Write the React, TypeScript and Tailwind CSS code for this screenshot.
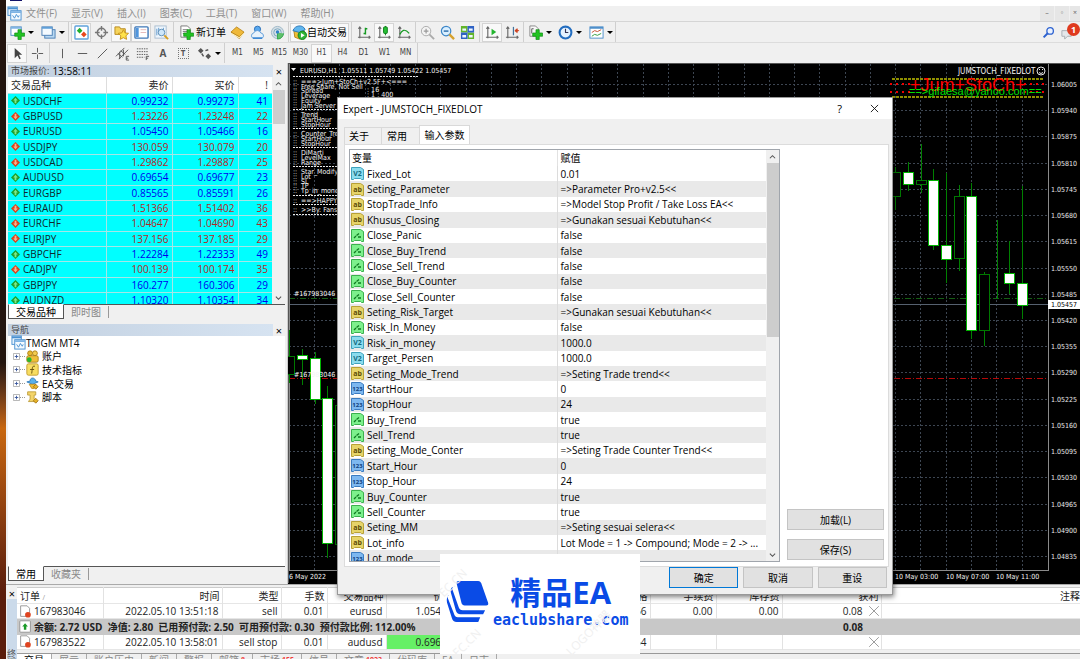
import type { ReactNode } from "react";

type Quote = [symbol: string, bid: string, ask: string, spread: number, up: boolean];
type ParamKind = "double" | "string" | "bool" | "int";

const QUOTES: Quote[] = [
  ["USDCHF", "0.99232", "0.99273", 41, true],
  ["GBPUSD", "1.23226", "1.23248", 22, false],
  ["EURUSD", "1.05450", "1.05466", 16, true],
  ["USDJPY", "130.059", "130.079", 20, false],
  ["USDCAD", "1.29862", "1.29887", 25, false],
  ["AUDUSD", "0.69654", "0.69677", 23, true],
  ["EURGBP", "0.85565", "0.85591", 26, true],
  ["EURAUD", "1.51366", "1.51402", 36, false],
  ["EURCHF", "1.04647", "1.04690", 43, false],
  ["EURJPY", "137.156", "137.185", 29, false],
  ["GBPCHF", "1.22284", "1.22333", 49, true],
  ["CADJPY", "100.139", "100.174", 35, false],
  ["GBPJPY", "160.277", "160.306", 29, true],
  ["AUDNZD", "1.10320", "1.10354", 34, true],
];

const PARAMS: [ParamKind, string, string][] = [
  ["double", "Fixed_Lot", "0.01"],
  ["string", "Seting_Parameter", "=>Parameter Pro+v2.5<<"],
  ["string", "StopTrade_Info", "=>Model Stop Profit / Take Loss EA<<"],
  ["string", "Khusus_Closing", "=>Gunakan sesuai Kebutuhan<<"],
  ["bool", "Close_Panic", "false"],
  ["bool", "Close_Buy_Trend", "false"],
  ["bool", "Close_Sell_Trend", "false"],
  ["bool", "Close_Buy_Counter", "false"],
  ["bool", "Close_Sell_Counter", "false"],
  ["string", "Seting_Risk_Target", "=>Gunakan sesuai Kebutuhan<<"],
  ["bool", "Risk_In_Money", "false"],
  ["double", "Risk_in_money", "1000.0"],
  ["double", "Target_Persen", "1000.0"],
  ["string", "Seting_Mode_Trend", "=>Seting Trade trend<<"],
  ["int", "StartHour", "0"],
  ["int", "StopHour", "24"],
  ["bool", "Buy_Trend", "true"],
  ["bool", "Sell_Trend", "true"],
  ["string", "Seting_Mode_Conter", "=>Seting Trade Counter Trend<<"],
  ["int", "Start_Hour", "0"],
  ["int", "Stop_Hour", "24"],
  ["bool", "Buy_Counter", "true"],
  ["bool", "Sell_Counter", "true"],
  ["string", "Seting_MM", "=>Seting sesuai selera<<"],
  ["string", "Lot_info", "Lot Mode = 1 -> Compound; Mode = 2 -> ..."],
  ["int", "Lot_mode", "1"],
];

const PRICES = [
  "1.06005", "1.05940", "1.05875", "1.05810", "1.05745", "1.05680", "1.05615",
  "1.05550", "1.05485", "1.05420", "1.05355", "1.05290", "1.05225", "1.05160",
  "1.05095", "1.05030", "1.04965", "1.04900", "1.04835",
];

// x, high, low, body top, body bottom, bearish
const CANDLES: [number, number, number, number, number, boolean][] = [
  [1, 267, 320, 293, 311, false],
  [14, 286, 322, 292, 296, true],
  [27, 289, 341, 295, 336, true],
  [39, 323, 495, 335, 480, true],
  [52, 330, 495, 342, 481, false],
  [607, 104, 147, 109, 133, false],
  [620, 99, 128, 109, 121, true],
  [633, 81, 130, 117, 121, false],
  [645, 106, 187, 117, 182, true],
  [658, 110, 220, 182, 196, true],
  [671, 122, 208, 133, 195, false],
  [683, 120, 276, 133, 267, true],
  [696, 209, 283, 211, 267, false],
  [709, 157, 236, 211, 211, false],
  [721, 178, 231, 210, 220, true],
  [734, 123, 256, 220, 242, true],
];

const COMMENTS = [
  "-", "===>Jum+StoCh+v2.5F+<===", "Free Share, Not Sell", "Spread", "Leverage", "Equity",
  "Jam Server", "-", "Trend", "StartHour", "StopHour", "-", "Counter_Trend", "StartHour",
  "StopHour", "-", "DiMarti", "LevelMax", "Range", "-", "Star_Modify", "Lot", "SL", "TP",
  "Tp_in_money", "-", "==>HAPPY", "-", ">>By: Fansdi", "-",
];

function Svg({ children, size = "size-[15px]" }: { children: ReactNode; size?: string }) {
  return (
    <svg viewBox="0 0 16 16" className={`${size} shrink-0`} fill="none" aria-hidden="true">
      {children}
    </svg>
  );
}

const Plus = ({ x = 5, y = 5 }: { x?: number; y?: number }) => (
  <path
    d={`M${x + 3.5} ${y}h3.500v3.500h3.500v3.500h-3.500v3.500h-3.500v-3.500h-3.500v-3.500h3.500z`}
    fill="#22c322"
    stroke="#0a8a12"
    strokeWidth=".7"
  />
);

const Axes = () => (
  <path d="M3 2v12M1 13h13M1.500 4L3 2l1.500 2M12.500 11.500L14 13l-1.500 1.500" stroke="#666" strokeWidth="1.200" />
);

const Windows = () => (
  <Svg>
    <rect x="1" y="1" width="10" height="9" fill="#e8f3fd" stroke="#4a90d0" />
    <path d="M1 2.500h10" stroke="#4a90d0" strokeWidth="2" />
    <rect x="4" y="5" width="11" height="10" fill="#f4faff" stroke="#4a90d0" />
    <path d="M4 6.500h11" stroke="#7fb4e4" strokeWidth="2" />
    <path d="M6 10l2 3 2-4 2 3 1-2" stroke="#4a90d0" />
  </Svg>
);

function Tool({ label, pressed, children }: { label: string; pressed?: boolean; children: ReactNode }) {
  return (
    <button
      type="button"
      aria-label={label}
      className={`flex h-[19px] w-5 shrink-0 items-center justify-center ${
        pressed ? "border border-[#d4d4d4] bg-[#f9f9f9]" : ""
      }`}
    >
      {children}
    </button>
  );
}

const Caret = () => (
  <span className="flex w-2 shrink-0 justify-center">
    <span className="border-x-[3px] border-t-[3px] border-x-transparent border-t-black" />
  </span>
);

const Sep = ({ wide }: { wide?: boolean }) => (
  <span className={`flex h-full shrink-0 justify-center ${wide ? "w-[5px]" : "w-[3px]"}`}>
    <span className="w-px bg-[#cfcfcf]" />
  </span>
);

function MenuBar() {
  const menus = ["文件(F)", "显示(V)", "插入(I)", "图表(C)", "工具(T)", "窗口(W)", "帮助(H)"];
  return (
    <nav className="flex h-4 shrink-0 items-center border-b border-[#d5d5d5] bg-[#f0f0f0] pl-px text-[10px] text-[#8f8f8f]">
      <Windows />
      <div className="ml-1 flex gap-[14px]">
        {menus.map((m) => (
          <button key={m} type="button">{m}</button>
        ))}
      </div>
      <div className="ml-auto flex h-full gap-px text-[7px] text-[#666]">
        <button type="button" aria-label="Minimize" className="w-[14px] bg-[#e6e6e6]">–</button>
        <button type="button" aria-label="Restore" className="w-[14px] bg-[#e6e6e6]">▫</button>
        <button type="button" aria-label="Close" className="w-[10px] bg-[#e6e6e6]">×</button>
      </div>
    </nav>
  );
}

function MainToolbar() {
  return (
    <div className="flex h-[21px] shrink-0 items-center border-b border-[#dcdcdc] bg-[#f0f0f0] pl-px text-[10px] text-black">
      <Tool label="New chart">
        <Svg>
          <rect x="1" y="2" width="11" height="9" fill="#fff" stroke="#4d8ac4" />
          <path d="M1 3h11" stroke="#7fb4e4" strokeWidth="2" />
          <Plus />
        </Svg>
      </Tool>
      <Caret />
      <span className="w-[3px]" />
      <Tool label="Profiles">
        <Svg>
          <rect x="4" y="5" width="11" height="9" fill="#b9d8f2" stroke="#4a7fb5" />
          <rect x="1" y="2" width="11" height="9" fill="#f4faff" stroke="#4a7fb5" />
          <path d="M1 3h11" stroke="#5f9fd8" strokeWidth="2" />
        </Svg>
      </Tool>
      <Caret />
      <Sep wide />
      <Tool label="Market watch" pressed>
        <Svg>
          <rect x="1" y="1" width="14" height="14" rx="1" fill="#fff" stroke="#5fa3dc" strokeWidth="1.500" />
          <path d="M6 3l3 3-3 3-3-3z" fill="#1fae2d" />
          <path d="M10.500 7l3 3-3 3-3-3z" fill="#e8471c" />
        </Svg>
      </Tool>
      <Tool label="Data window">
        <Svg>
          <circle cx="8" cy="8" r="4.500" stroke="#777" strokeWidth="1.500" />
          <path d="M8 1v5M8 10v5M1 8h5M10 8h5" stroke="#777" strokeWidth="1.500" />
        </Svg>
      </Tool>
      <Tool label="Navigator" pressed>
        <Svg>
          <path d="M1 2h5l1 2h5v6H1z" fill="#f6d45c" stroke="#b88a1d" />
          <path d="M10 5l1.700 3.400 3.800.5-2.800 2.600.7 3.800L10 13.500l-3.400 1.800.7-3.800-2.800-2.600 3.800-.5z" fill="#ffe24a" stroke="#c6921a" />
        </Svg>
      </Tool>
      <Tool label="Terminal" pressed>
        <Svg>
          <rect x="1" y="2" width="14" height="12" rx="1" fill="#fff" stroke="#3f78b8" strokeWidth="1.500" />
          <rect x="2" y="3" width="3" height="10" fill="#4f95dd" />
          <path d="M7 5h6M7 8h6" stroke="#e3b6b6" />
        </Svg>
      </Tool>
      <Tool label="Strategy tester">
        <Svg>
          <rect x="1" y="1" width="12" height="13" fill="#eef6fd" stroke="#a9bdd0" />
          <path d="M3 4v7M5 3v6M10 3v3" stroke="#5e97cc" />
          <circle cx="8" cy="8" r="3.500" fill="#cfe8fb" stroke="#5d8db5" />
          <path d="M11 11l4 4" stroke="#d9a022" strokeWidth="2" />
        </Svg>
      </Tool>
      <Sep wide />
      <button type="button" className="mr-px flex h-full items-center whitespace-nowrap">
        <span className="flex w-5 justify-center">
          <Svg>
            <path d="M2 1h7l3 3v9H2z" fill="#fff" stroke="#777" />
            <path d="M4 5h5M4 7h5M4 9h3" stroke="#777" />
            <Plus />
          </Svg>
        </span>
        新订单
      </button>
      <Tool label="MetaEditor">
        <Svg>
          <path d="M1 8l6-6 8 6-5 7z" fill="#a8720f" />
          <path d="M1.500 9l8.500 4.500 4.500-5" stroke="#fff0b8" strokeWidth="1.500" />
          <path d="M1 7.500L7 2l8 5.500-5 5z" fill="#efb93a" stroke="#b07c15" strokeWidth=".7" />
        </Svg>
      </Tool>
      <Tool label="Community">
        <Svg>
          <circle cx="8" cy="4.500" r="3.300" fill="#57a7ee" stroke="#2a6fb8" />
          <path d="M3 14a3 3 0 0 1 1-5.500 4 4 0 0 1 7.500 0A3 3 0 0 1 13 14z" fill="#e8f2fb" stroke="#5b9ad8" />
          <path d="M3 14h10" stroke="#2f7fd0" strokeWidth="1.500" />
        </Svg>
      </Tool>
      <Tool label="Signals">
        <Svg>
          <circle cx="8" cy="8" r="6.500" fill="#d5dfe6" stroke="#9db8c6" />
          <circle cx="8" cy="8" r="4" stroke="#7aa8c0" />
          <path d="M8 8v7c4 0 6-3 6.500-6" fill="#5fc06c" stroke="#32a84b" />
          <circle cx="8" cy="7.500" r="1.800" fill="#2f80c8" />
        </Svg>
      </Tool>
      <Sep />
      <button
        type="button"
        className="flex h-[19px] w-[59px] shrink-0 items-center whitespace-nowrap border border-[#d4d4d4] bg-[#f9f9f9] pl-px"
      >
        <Svg>
          <path d="M2 6h11v7l-5 2-5-2z" fill="#f1bf36" stroke="#b78717" />
          <path d="M1 6c2-6 11-7 13-1l-6 3z" fill="#60b6ee" stroke="#2b78b8" />
          <circle cx="11" cy="11" r="4.500" fill="#2fb336" stroke="#15801d" />
          <path d="M9.500 8.500l4 2.500-4 2.500z" fill="#fff" />
        </Svg>
        自动交易
      </button>
      <Sep wide />
      <Tool label="Bar chart">
        <Svg><Axes /><path d="M9 3v7M7 9h2M9 4h2" stroke="#159a22" strokeWidth="1.500" /></Svg>
      </Tool>
      <Tool label="Candlesticks" pressed>
        <Svg><Axes /><path d="M9 1v10" stroke="#0b7a16" /><rect x="7" y="2" width="4" height="7" rx="1" fill="#27c135" stroke="#0b7a16" /></Svg>
      </Tool>
      <Tool label="Line chart">
        <Svg><Axes /><path d="M3 10c2-4 5-7 10-1" stroke="#159a22" strokeWidth="1.300" /></Svg>
      </Tool>
      <Sep />
      <Tool label="Zoom in">
        <Svg>
          <circle cx="6.500" cy="6.500" r="5" fill="#f3f3f3" stroke="#aaa" />
          <path d="M4 6.500h5M6.500 4v5" stroke="#999" strokeWidth="1.300" />
          <path d="M10 10l5 5" stroke="#aaa" strokeWidth="2" />
        </Svg>
      </Tool>
      <Tool label="Zoom out">
        <Svg>
          <circle cx="6.500" cy="6.500" r="5" fill="#d9efff" stroke="#3c86c8" strokeWidth="1.300" />
          <path d="M4 6.500h5" stroke="#2769a8" strokeWidth="1.500" />
          <path d="M10 10l5 5" stroke="#d6a12d" strokeWidth="2.500" />
        </Svg>
      </Tool>
      <Tool label="Tile windows">
        <Svg>
          <path d="M1 1h7v7H1zM8 8h7v7H8z" fill="#62b52a" />
          <path d="M8 1h7v7H8zM1 8h7v7H1z" fill="#2f62c4" />
          <path d="M2.500 5h4M9.500 5h4M2.500 12h4M9.500 12h4" stroke="#eef6ff" strokeWidth="2.500" />
        </Svg>
      </Tool>
      <Sep wide />
      <Tool label="Auto scroll" pressed>
        <Svg><Axes /><path d="M7 4l5 3.500L7 11z" fill="#23b52f" /></Svg>
      </Tool>
      <Tool label="Chart shift">
        <Svg><Axes /><path d="M9 2v9" stroke="#44739c" strokeWidth="1.300" /><path d="M15 6h-4M13 4l-2.500 2L13 8z" stroke="#cc3e1d" fill="#cc3e1d" /></Svg>
      </Tool>
      <Sep />
      <Tool label="Indicators">
        <Svg>
          <path d="M2 1h6l3 3v8H2z" fill="#f7f7f7" stroke="#888" />
          <path d="M4 9V4h2" stroke="#555" />
          <Plus />
        </Svg>
      </Tool>
      <Caret />
      <span className="w-[2px]" />
      <Tool label="Periods">
        <Svg>
          <circle cx="8" cy="8" r="6.300" fill="#e4f2ff" stroke="#246ec0" strokeWidth="2.200" />
          <path d="M8 4v4h3" stroke="#335" strokeWidth="1.200" />
        </Svg>
      </Tool>
      <Caret />
      <span className="w-[3px]" />
      <Tool label="Templates">
        <Svg>
          <rect x="1" y="2" width="14" height="12" fill="#fff" stroke="#4e8fca" />
          <path d="M1 3h14" stroke="#4e8fca" strokeWidth="2" />
          <path d="M3 8l3-2 3 1 4-2" stroke="#c24a2a" />
          <path d="M3 12l3-2 3 1 4-2" stroke="#2d9b3a" />
        </Svg>
      </Tool>
      <Caret />
      <Sep />
      <span className="ml-auto flex items-center gap-[5px]">
        <button type="button" aria-label="Search">
          <Svg size="size-[13px]">
            <circle cx="10" cy="6" r="4" fill="#eaf2ff" stroke="#2d62d0" strokeWidth="1.600" />
            <path d="M7 9l-5 5" stroke="#2d62d0" strokeWidth="2.500" />
          </Svg>
        </button>
        <button type="button" aria-label="Notifications" className="relative flex h-5 w-5 items-center">
          <Svg>
            <path d="M2 6h10v6H8l-3 3v-3H2z" fill="#e4e7ea" stroke="#a8adb2" />
          </Svg>
          <span className="absolute right-0 top-px flex size-[13px] items-center justify-center rounded-full bg-[#df3a1e] text-[9px] font-bold text-white">
            1
          </span>
        </button>
      </span>
    </div>
  );
}

function DrawToolbar() {
  const grey = "#555";
  return (
    <div className="flex h-5 shrink-0 items-center bg-[#f0f0f0] pl-px">
      <Tool label="Cursor" pressed>
        <Svg><path d="M5 2v11l3-3 2 4 1.500-.7-2-4H13z" fill="#444" /></Svg>
      </Tool>
      <Tool label="Crosshair">
        <Svg><path d="M8 2v5M8 9v5M2 8h5M9 8h5" stroke={grey} /></Svg>
      </Tool>
      <Sep wide />
      <Tool label="Vertical line"><Svg><path d="M8 3v10" stroke={grey} /></Svg></Tool>
      <Tool label="Horizontal line"><Svg><path d="M3 8h10" stroke={grey} /></Svg></Tool>
      <Tool label="Trendline"><Svg><path d="M3 13L13 3" stroke={grey} /></Svg></Tool>
      <Tool label="Equidistant channel">
        <Svg><path d="M1 11L10 2M4 14L14 4M3 8l5 4M6 5l5 4M5 14V6M9 11V4" stroke={grey} /><path d="M15 11h-3v4h3M12 13h2" stroke={grey} /></Svg>
      </Tool>
      <Tool label="Fibonacci">
        <Svg><path d="M2 3h12M2 6h12M2 9h12M2 12h8" stroke={grey} strokeDasharray="1.500 1" /><path d="M15 11h-3v4M12 13h2" stroke={grey} /></Svg>
      </Tool>
      <span className="w-px" />
      <Tool label="Text"><span className="text-[10px] font-bold text-[#555]">A</span></Tool>
      <Tool label="Text label">
        <span className="flex size-[11px] items-center justify-center border border-dotted border-[#777] text-[8px] font-bold text-[#555]">T</span>
      </Tool>
      <span className="w-px" />
      <Tool label="Arrows">
        <Svg><path d="M4 2l3 3-3 3-3-3zM12 8l3 3-3 3-3-3z" fill={grey} /><path d="M5 8l2 3M9 5l3-1" stroke={grey} strokeWidth="1.500" /></Svg>
      </Tool>
      <Caret />
      <Sep wide />
      <div className="flex h-full items-center font-['DejaVu_Sans_Condensed',sans-serif] text-[8px] text-[#444]">
        {["M1", "M5", "M15", "M30", "H1", "H4", "D1", "W1", "MN"].map((tf) => (
          <button
            key={tf}
            type="button"
            className={`h-[19px] w-[21px] ${tf === "H1" ? "border border-[#d4d4d4] bg-[#f9f9f9]" : ""}`}
          >
            {tf}
          </button>
        ))}
      </div>
      <Sep />
    </div>
  );
}

function PanelTitle({ children }: { children: ReactNode }) {
  return (
    <div className="flex h-3 shrink-0 items-center bg-[#f0f0f0] text-[9px] text-[#444]">
      <h2 className="flex h-full flex-1 items-center bg-gradient-to-r from-[#c2d0e0] to-[#d6e3f1] pl-[3px]">
        {children}
      </h2>
      <button type="button" aria-label="Close" className="w-3 text-[11px] leading-none text-black">×</button>
    </div>
  );
}

function PanelTabs({ tabs }: { tabs: [string, string] }) {
  return (
    <div className="flex h-4 shrink-0 items-start border-t border-[#555] bg-[#f0f0f0] text-[10px]">
      <button type="button" className="-mt-px h-[15px] border border-[#555] border-t-white bg-white px-[7px] leading-none text-black">
        {tabs[0]}
      </button>
      <button type="button" className="mt-px h-3 border-r border-[#999] px-[7px] leading-none text-[#888]">
        {tabs[1]}
      </button>
    </div>
  );
}

function MarketWatch() {
  return (
    <section className="flex flex-col">
      <PanelTitle>
        市场报价: <span className="ml-[3px] text-[10px] text-black">13:58:11</span>
      </PanelTitle>
      <div className="flex h-[227px] overflow-hidden bg-white">
        <div className="flex-1 overflow-hidden">
          <table className="h-[231px] w-full table-fixed border-collapse text-[10px] leading-none">
            <colgroup>
              <col />
              <col className="w-[66px]" />
              <col className="w-[66px]" />
              <col className="w-[34px]" />
            </colgroup>
            <thead>
              <tr className="h-4 text-[#222]">
                <th className="border-r border-[#ddd] p-0 pl-[3px] text-left font-normal">交易品种</th>
                <th className="border-r border-[#ddd] p-0 pr-[3px] text-right font-normal">卖价</th>
                <th className="border-r border-[#ddd] p-0 pr-[3px] text-right font-normal">买价</th>
                <th className="p-0 pr-1 text-right font-normal">!</th>
              </tr>
            </thead>
            <tbody className="bg-[#00ffff]">
              {QUOTES.map(([symbol, bid, ask, spread, up]) => (
                <tr key={symbol} className={`h-[15px] border-t border-[#a5e6e6] ${up ? "text-[#0000ee]" : "text-[#b82424]"}`}>
                  <td className="border-r border-[#a5e6e6] p-0 pl-[3px] text-[#10282c]">
                    <span className="flex items-center gap-[3px]">
                      <svg viewBox="0 0 10 10" className="size-[9px]" aria-hidden="true">
                        <path d="M5 0l5 5-5 5-5-5z" fill={up ? "#1d9f2c" : "#d8401c"} />
                        <path d={up ? "M5 2l2.500 3H6v3H4V5H2.500z" : "M5 8l2.500-3H6V2H4v3H2.500z"} fill={up ? "#7fe889" : "#ffb08a"} />
                      </svg>
                      {symbol}
                    </span>
                  </td>
                  <td className="border-r border-[#a5e6e6] p-0 pr-[3px] text-right">{bid}</td>
                  <td className="border-r border-[#a5e6e6] p-0 pr-[3px] text-right">{ask}</td>
                  <td className="p-0 pr-1 text-right">{spread}</td>
                </tr>
              ))}
            </tbody>
          </table>
        </div>
        <ScrollBar thumb="h-[34px]" />
      </div>
      <PanelTabs tabs={["交易品种", "即时图"]} />
    </section>
  );
}

function ScrollBar({ thumb }: { thumb: string }) {
  return (
    <div className="flex w-[13px] shrink-0 flex-col items-center bg-[#f0f0f0] py-[2px]">
      <svg viewBox="0 0 8 8" className="my-px size-[7px]" fill="none"><path d="M1 6l3-3 3 3" stroke="#555" strokeWidth="1.200" /></svg>
      <div className={`mt-[2px] w-[12px] bg-[#cdcdcd] ${thumb}`} />
      <svg viewBox="0 0 8 8" className="mb-px mt-auto size-[7px]" fill="none"><path d="M1 3l3 3 3-3" stroke="#555" strokeWidth="1.200" /></svg>
    </div>
  );
}

const NAV: [string, ReactNode][] = [
  ["账户", <><circle cx="5" cy="4" r="3" fill="#e8b830" stroke="#a87a10" /><circle cx="11" cy="4" r="3" fill="#f2cc52" stroke="#a87a10" /><rect x="1" y="7" width="14" height="8" rx="2" fill="#eebf3a" stroke="#a87a10" /><circle cx="4" cy="12" r="3" fill="#29b52f" /></>],
  ["技术指标", <><rect x="1" y="1" width="14" height="14" rx="2" fill="#f7dd62" stroke="#bd9422" /><path d="M11 4c-4-1-3 3-4 9M5 8h5" stroke="#6b5410" strokeWidth="1.200" /></>],
  ["EA交易", <><path d="M1 6l4-1c0-5 6-5 7 0l3 1-7 3z" fill="#5ab0ea" stroke="#2b78b8" /><path d="M4 9h8l-2 5H7z" fill="#f1bf36" stroke="#b78717" /><path d="M12 9l3 3-3 3-3-3z" fill="#e5b228" stroke="#9c6d10" /></>],
  ["脚本", <><path d="M2 1h10v4h-2v5l2 3H3l2-3V5H2z" fill="#f3d469" stroke="#b99831" /><path d="M12 9l3 3-3 3-3-3z" fill="#e5b228" stroke="#9c6d10" /></>],
];

function Navigator() {
  return (
    <section className="mt-1 flex flex-1 flex-col overflow-hidden">
      <PanelTitle>导航</PanelTitle>
      <div className="flex-1 bg-white">
        <ul className="grid h-[68px] grid-rows-5 pl-[3px] text-[10px] leading-none text-black">
          <li className="flex items-center">
            <Windows />
            TMGM MT4
          </li>
          {NAV.map(([label, icon]) => (
            <li key={label} className="flex items-center pl-[2px]">
              <svg viewBox="0 0 8 8" className="size-[7px]" fill="none" aria-hidden="true">
                <path d="M.5.5h7v7h-7z" stroke="#aaa" />
                <path d="M2 4h4M4 2v4" stroke="#36549c" />
              </svg>
              <span className="w-[5px] border-t border-dotted border-[#999]" />
              <span className="ml-px mr-[3px]"><Svg size="size-[13px]">{icon}</Svg></span>
              {label}
            </li>
          ))}
        </ul>
      </div>
      <PanelTabs tabs={["常用", "收藏夹"]} />
    </section>
  );
}

function Chart() {
  return (
    <section className="flex-1 overflow-hidden bg-black font-['DejaVu_Sans_Condensed',sans-serif] text-[7px] text-[#e8e8e8]">
      <svg className="block h-full w-full" fill="none" aria-label="EURUSD H1">
        <path d="M0 .5H792M.5 0V520" stroke="#555" />
        {PRICES.map((p, i) => (
          <g key={p}>
            <path d={`M1 ${Math.round(21 + i * 26.22)}.5H760`} stroke="#3d4652" strokeDasharray="2 2" />
            <text x="763" y={Math.round(24 + i * 26.22)} fill="#e8e8e8">{p}</text>
          </g>
        ))}
        {Array.from({ length: 29 }, (_, i) => (
          <path key={i} d={`M${Math.round(26 + i * 25.27)}.5 1V508`} stroke="#3d4652" strokeDasharray="2 2" />
        ))}
        <path d="M1 235.500H760" stroke="#155d15" strokeDasharray="6 2 1 2" />
        <path d="M1 241.500H760" stroke="#56616f" />
        <path d="M1 315.500H760" stroke="#b40808" strokeDasharray="6 2 1 2" />
        <path d="M1.500 1V508M1 507.500H760M760.500 1V508" stroke="#8a8a8a" />
        {CANDLES.map(([x, high, low, top, bottom, bear]) => (
          <g key={x} stroke={bear ? "#00b400" : "#007800"}>
            <path d={`M${x}.5 ${high}V${low}`} stroke="#008000" />
            <rect x={x - 4.5} y={top + 0.5} width="10" height={bottom - top} fill={bear ? "#fff" : "#000"} />
          </g>
        ))}
        <g fill="#f4f4f4">
          <path d="M3 5h5l-2.500 3z" />
          <text x="12" y="10" xmlSpace="preserve">EURUSD,H1  1.05511 1.05749 1.05422 1.05457</text>
          {COMMENTS.map((line, i) => {
            const y = Math.round(15 + i * 4.75);
            return line === "-" ? (
              <path key={i} d={`M5 ${y - 2}.5H${i === 0 ? 130 : 60}`} stroke="#e8e8e8" strokeDasharray="2 1" />
            ) : (
              <text key={i} y={y + 1}>
                <tspan x="5">::</tspan>
                <tspan x="13">{line}</tspan>
              </text>
            );
          })}
          <text x="79" y="29">: 16</text>
          <text x="79" y="34">: 1 : 400</text>
          <text x="6" y="233">#167983046</text>
          <text x="6" y="314">#167983046</text>
          <text x="1" y="516">6 May 2022</text>
          <text x="607" y="516">10 May 03:00</text>
          <text x="658" y="516">10 May 07:00</text>
          <text x="708" y="516">10 May 11:00</text>
          <text x="670" y="11" className="text-[8px]">JUMSTOCH_FIXEDLOT</text>
        </g>
        <g stroke="#e8e8e8">
          <circle cx="753" cy="8" r="4" />
          <path d="M751 9.500q2 2 4 0M751 6.500h1M754 6.500h1" />
        </g>
        <path d="M604 16H756M604 34H756" stroke="#8f8f00" strokeWidth="2" strokeDasharray="3 1" />
        <path d="M602 21h20M602 29h20M736 21h20M736 29h20" stroke="#f00000" strokeWidth="2" strokeDasharray="2 4" />
        <text x="622" y="28" fill="#ff0000" className="font-['Liberation_Sans',sans-serif] text-[18px]">+Jum+StoCh+</text>
        <text x="621" y="32" fill="#00e000" className="font-['Liberation_Sans',sans-serif] text-[11px]">==&gt;gifaesa@yahoo.com==</text>
        <rect x="760" y="237" width="40" height="9" fill="#fff" />
        <text x="763" y="244" fill="#000">1.05457</text>
      </svg>
    </section>
  );
}

const Doc = () => (
  <Svg size="size-[13px]">
    <path d="M2 1h8l3 3v10H2z" fill="#fff" stroke="#888" />
    <circle cx="11" cy="12" r="3.500" fill="#df4420" />
  </Svg>
);

type Order = { id: string; time: string; type: string; symbol: string; price: string; now: string; fee: string; profit: string };

function OrderRow({ order, pending }: { order: Order; pending?: boolean }) {
  const cell = "border-r border-[#e2e2e2] p-0 pr-[3px]";
  return (
    <tr className="h-[15px] border-b border-[#e6e6e6]">
      <td className={`${cell} text-left`}>
        <span className="flex items-center gap-[2px] pl-[2px]"><Doc />{order.id}</span>
      </td>
      <td className={cell}>{order.time}</td>
      <td className={cell}>{order.type}</td>
      <td className={cell}>0.01</td>
      <td className={cell}>{order.symbol}</td>
      <td className={`${cell} ${pending ? "bg-[#66f066]" : ""}`}>{order.price}</td>
      <td className={cell} />
      <td className={cell}>{order.now}</td>
      <td className={cell}>{order.fee}</td>
      <td className={cell}>{order.fee}</td>
      <td className="border-r border-[#e2e2e2] p-0 pr-px">
        <span className="flex items-center justify-end gap-[5px]">
          {order.profit}
          <button type="button" aria-label="Close order">
            <svg viewBox="0 0 10 10" className="size-3" fill="none"><path d="M1 1l8 8M9 1L1 9" stroke="#999" strokeWidth=".8" /></svg>
          </button>
        </span>
      </td>
      <td />
    </tr>
  );
}

function Terminal() {
  const heads = ["时间", "类型", "手数", "交易品种", "价格", "止损", "价格", "手续费", "库存费", "获利", "注释"];
  const tabs: [string, string?][] = [
    ["交易"], ["展示"], ["账户历史"], ["新闻"], ["警报"], ["邮箱", "8"], ["市场", "155"], ["信号"], ["文章", "1023"], ["代码库"], ["EA"], ["日志"],
  ];
  return (
    <section className="flex h-[75px] shrink-0 overflow-hidden border-t border-[#aaa] bg-[#f0f0f0] pt-[2px]">
      <div className="flex w-[11px] shrink-0 flex-col items-center pl-px">
        <button type="button" aria-label="Close" className="h-3 text-[11px] leading-none">×</button>
        <div className="flex w-[10px] flex-1 items-end bg-[#cbdaea] text-[9px] leading-none text-[#555]">
          <span className="-mb-[8px] [writing-mode:vertical-rl]">终端</span>
        </div>
      </div>
      <div className="min-w-0 flex-1">
        <table className="w-full table-fixed border-collapse border-t border-[#ccc] bg-white text-right text-[10px] leading-none text-[#222]">
          <colgroup>
            <col className="w-[86px]" />
            <col className="w-[119px]" />
            <col className="w-[59px]" />
            <col className="w-[46px]" />
            <col className="w-[59px]" />
            <col className="w-[70px]" />
            <col className="w-[130px]" />
            <col className="w-[64px]" />
            <col className="w-[66px]" />
            <col className="w-[66px]" />
            <col className="w-[99px]" />
            <col />
          </colgroup>
          <thead>
            <tr className="h-4 border-b border-[#e6e6e6]">
              <th className="border-r border-[#e2e2e2] p-0 pl-[3px] text-left font-normal">
                订单 <span className="text-[7px] text-[#999]">∕</span>
              </th>
              {heads.map((h, i) => (
                <th key={i} className="whitespace-nowrap border-r border-[#e2e2e2] p-0 pr-[2px] font-normal last:border-0 last:pr-0">{h}</th>
              ))}
            </tr>
          </thead>
          <tbody>
            <OrderRow
              order={{ id: "167983046", time: "2022.05.10 13:51:18", type: "sell", symbol: "eurusd", price: "1.05474", now: "1.05466", fee: "0.00", profit: "0.08" }}
            />
            <tr className="h-4 bg-[#c8c8c8] font-bold">
              <td colSpan={10} className="p-0 text-left">
                <span className="flex items-center gap-[2px] whitespace-pre pl-[2px]">
                  <Svg size="size-[13px]">
                    <rect x="1" y="1" width="13" height="14" rx="1" fill="#fff" stroke="#888" />
                    <path d="M7.500 4l3.500 4H9v4H6V8H4z" fill="#1b9a28" />
                  </Svg>
                  {"余额: 2.72 USD  净值: 2.80  已用预付款: 2.50  可用预付款: 0.30  预付款比例: 112.00%"}
                </span>
              </td>
              <td className="p-0 pr-[18px]">0.08</td>
              <td />
            </tr>
            <OrderRow
              pending
              order={{ id: "167983522", time: "2022.05.10 13:58:01", type: "sell stop", symbol: "audusd", price: "0.69612", now: "0.69654", fee: "", profit: "" }}
            />
          </tbody>
        </table>
        <div className="mt-[3px] flex items-start border-t border-[#999] text-[10px] leading-none text-[#888]">
          {tabs.map(([label, badge], i) => (
            <button
              key={label}
              type="button"
              className={`flex h-4 shrink-0 items-start gap-[2px] whitespace-nowrap border-r border-[#aaa] px-[7px] pt-px leading-none ${i === 0 ? "bg-white text-black" : ""}`}
            >
              {label}
              {badge && <span className="pt-px text-[7px] font-bold leading-none text-[#f04040]">{badge}</span>}
            </button>
          ))}
        </div>
      </div>
    </section>
  );
}

const KIND: Record<ParamKind, { fill: string; edge: string; ink: string; glyph: string }> = {
  double: { fill: "#8bdcee", edge: "#3fa3bd", ink: "#156b80", glyph: "V2" },
  string: { fill: "#e6d469", edge: "#b8a136", ink: "#5c4c08", glyph: "ab" },
  bool: { fill: "#7df08c", edge: "#3bb04d", ink: "#0e7a20", glyph: "" },
  int: { fill: "#7db8f0", edge: "#3b7cc0", ink: "#123f7c", glyph: "123" },
};

function KindIcon({ kind }: { kind: ParamKind }) {
  const k = KIND[kind];
  return (
    <svg viewBox="0 0 13 13" className="size-[13px] shrink-0" fill="none" aria-hidden="true">
      <path d="M.5.5h9l3 2v10h-2l-1-1h-6l-1 1h-2z" fill={k.fill} stroke={k.edge} />
      {kind === "bool" ? (
        <path d="M3 9l2-2M5.500 6.500L8 4.500M7 8h3" stroke={k.ink} strokeWidth="1.300" />
      ) : (
        <text x="6.500" y="9" textAnchor="middle" fill={k.ink} className={`font-bold ${kind === "int" ? "text-[6px]" : "text-[7px]"}`}>
          {k.glyph}
        </text>
      )}
    </svg>
  );
}

function DialogButton({ children, primary }: { children: ReactNode; primary?: boolean }) {
  return (
    <button
      type="button"
      className={`h-[21px] border bg-[#e1e1e1] text-[10px] leading-none text-black ${
        primary ? "border-[#0078d7]" : "border-[#c4c4c4]"
      }`}
    >
      {children}
    </button>
  );
}

function ExpertDialog() {
  return (
    <div
      role="dialog"
      aria-labelledby="expert-title"
      className="absolute left-[337px] top-[97px] w-[556px] border border-[#999] bg-[#f0f0f0] text-[10px] leading-none text-black shadow-[1px_2px_5px_rgba(0,0,0,0.5)]"
    >
      <header className="flex h-[21px] items-center bg-white pl-[5px] pr-[13px]">
        <h1 id="expert-title" className="flex-1">Expert - JUMSTOCH_FIXEDLOT</h1>
        <button type="button" className="mr-[28px] text-[11px]">?</button>
        <button type="button" aria-label="Close">
          <svg viewBox="0 0 10 10" className="size-[9px]" fill="none"><path d="M1 1l8 8M9 1L1 9" stroke="#111" /></svg>
        </button>
      </header>
      <div role="tablist" className="ml-[6px] mt-[6px] flex items-end">
        <button type="button" role="tab" className="h-[17px] w-[38px] border border-b-0 border-[#d9d9d9] pl-1 text-left">关于</button>
        <button type="button" role="tab" className="h-[17px] w-[37px] border border-x-0 border-b-0 border-[#d9d9d9] pl-[5px] text-left">常用</button>
        <button type="button" role="tab" aria-selected="true" className="h-[19px] w-[51px] border border-b-0 border-[#d9d9d9] bg-white">输入参数</button>
      </div>
      <div className="ml-[6px] mr-[3px] flex gap-[7px] border border-[#dcdcdc] bg-white p-1">
        <div className="flex h-[413px] min-w-0 flex-1 overflow-hidden border border-[#a0a5ac]">
          <div className="flex-1 overflow-hidden">
            <table className="h-[416px] w-full table-fixed border-collapse">
              <colgroup>
                <col className="w-[207px]" />
                <col />
              </colgroup>
              <thead>
                <tr className="h-4">
                  <th className="border-r border-[#e2e2e2] p-0 pl-[2px] text-left font-normal">变量</th>
                  <th className="p-0 pl-[3px] text-left font-normal">赋值</th>
                </tr>
              </thead>
              <tbody>
                {PARAMS.map(([kind, name, value]) => (
                  <tr key={name} className="h-[15px] even:bg-[#e9e9e9]">
                    <td className="border-r border-[#dcdcdc] p-0 pl-px">
                      <span className="flex items-center gap-[3px]">
                        <KindIcon kind={kind} />
                        {name}
                      </span>
                    </td>
                    <td className="truncate p-0 pl-[3px]">{value}</td>
                  </tr>
                ))}
              </tbody>
            </table>
          </div>
          <ScrollBar thumb="h-[174px]" />
        </div>
        <div className="flex w-[97px] flex-col justify-end gap-[9px] pb-[2px]">
          <DialogButton>加载(L)</DialogButton>
          <DialogButton>保存(S)</DialogButton>
        </div>
      </div>
      <footer className="ml-auto grid w-[223px] grid-cols-3 gap-[5px] pb-[6px] pr-[5px]">
        <DialogButton primary>确定</DialogButton>
        <DialogButton>取消</DialogButton>
        <DialogButton>重设</DialogButton>
      </footer>
    </div>
  );
}

function Watermark() {
  return (
    <div className="absolute left-[440px] top-[554px] flex h-[100px] w-[200px] items-center overflow-hidden bg-white pb-[5px] pl-[6px] text-[#0a4be6]">
      <span className="absolute -left-1 top-5 -rotate-45 text-[12px] text-[#f0f0f0]">EC.CN</span>
      <span className="absolute left-[120px] top-[70px] -rotate-45 text-[12px] text-[#f0f0f0]">LOGO神器</span>
      <span className="absolute left-[10px] top-[80px] -rotate-45 text-[12px] text-[#f0f0f0]">EC.CN</span>
      <svg viewBox="0 0 44 44" className="size-[43px] shrink-0" fill="currentColor" aria-hidden="true">
        <path d="M13 1h20q2 0 3 2l7 20q1 3-2 3H19q-2 0-3-2L11 4q-1-3 2-3z" />
        <path d="M7 7q-1 2 0 4l6 17q1 3 4 3h23l-2 4H15q-4 0-5-4L5 13q-1-4 2-6z" />
        <path d="M3 15q-2 1-1 4l6 15q1 4 4 4h23l-2 5H11q-4 0-5-4L1 23q-1-5 2-8z" />
      </svg>
      <div className="ml-1 flex flex-col items-center">
        <strong className="text-[31px] leading-[36px]">精品EA</strong>
        <strong className="font-['DejaVu_Sans_Mono',monospace] text-[15px] leading-5">eaclubshare.com</strong>
      </div>
    </div>
  );
}

export default function App() {
  return (
    <div className="relative flex h-screen overflow-hidden bg-[#f0f0f0] font-['Open_Sans','Noto_Sans_CJK_SC',sans-serif]">
      <div className="w-[6px] shrink-0 bg-gradient-to-b from-[#23150f] from-55% via-[#c8670f] via-65% to-[#5a1d0c] to-90%" />
      <div className="flex min-w-0 flex-1 flex-col">
        <div className="h-[6px] shrink-0 bg-white pl-1">
          <div className="h-px w-3 bg-[#12126a]" />
        </div>
        <MenuBar />
        <MainToolbar />
        <DrawToolbar />
        <main className="flex min-h-0 flex-1">
          <aside className="flex w-[282px] shrink-0 flex-col border-r border-[#ccc] py-[2px] pl-[2px] pr-[2px]">
            <MarketWatch />
            <Navigator />
          </aside>
          <Chart />
        </main>
        <Terminal />
      </div>
      <ExpertDialog />
      <Watermark />
    </div>
  );
}
